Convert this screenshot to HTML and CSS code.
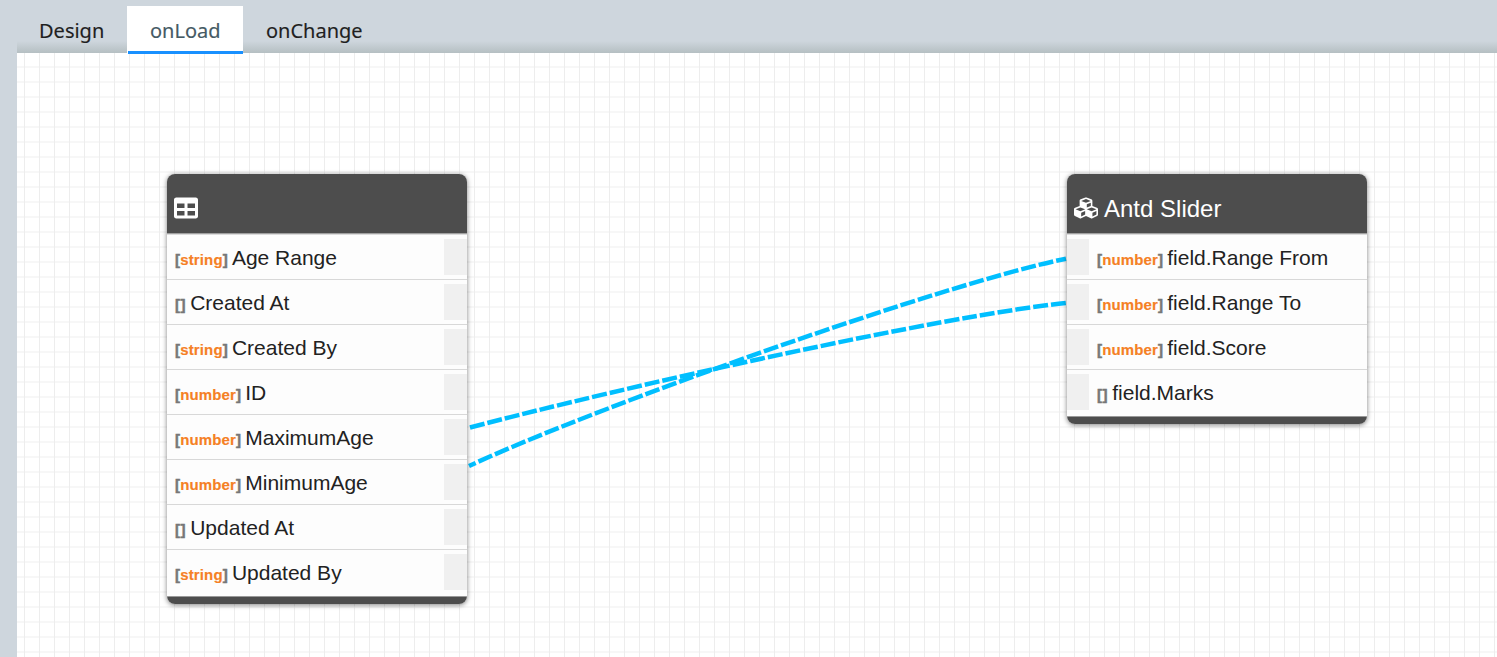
FILE: index.html
```html
<!DOCTYPE html>
<html lang="en">
<head>
<meta charset="utf-8">
<title>onLoad mapping</title>
<link rel="stylesheet" href="styles.css">
</head>
<body>
<main class="panel">
  <nav class="tabs">
    <a class="tab design">Design</a>
    <a class="tab active">onLoad</a>
    <a class="tab change">onChange</a>
  </nav>
  <section class="canvas">
    <svg class="links" viewBox="17 53 1480 604" width="1480" height="604">
      <path d="M470 427.5C620 388 940 316 1066 303"/>
      <path class="shifted" d="M469 466C600 405 950 282 1066 258.7"/>
    </svg>
    <article class="node source">
      <header class="title">
        <svg class="icon" viewBox="0 0 512 512"><path d="M464 32H48C21.49 32 0 53.49 0 80v352c0 26.51 21.49 48 48 48h416c26.51 0 48-21.49 48-48V80c0-26.51-21.49-48-48-48zM224 416H64v-96h160v96zm0-160H64v-96h160v96zm224 160H288v-96h160v96zm0-160H288v-96h160v96z"/></svg>
      </header>
      <div class="row"><b class="type">[<i>string</i>]</b><span class="name">Age Range</span><span class="port"></span></div>
      <div class="row"><b class="type empty">[]</b><span class="name">Created At</span><span class="port"></span></div>
      <div class="row"><b class="type">[<i>string</i>]</b><span class="name">Created By</span><span class="port"></span></div>
      <div class="row"><b class="type">[<i>number</i>]</b><span class="name">ID</span><span class="port"></span></div>
      <div class="row"><b class="type">[<i>number</i>]</b><span class="name">MaximumAge</span><span class="port"></span></div>
      <div class="row"><b class="type">[<i>number</i>]</b><span class="name">MinimumAge</span><span class="port"></span></div>
      <div class="row"><b class="type empty">[]</b><span class="name">Updated At</span><span class="port"></span></div>
      <div class="row last"><b class="type">[<i>string</i>]</b><span class="name">Updated By</span><span class="port"></span></div>
      <footer class="base"></footer>
    </article>
    <article class="node target">
      <header class="title">
        <svg class="icon" viewBox="0 0 512 512"><path d="M488.6 250.2L392 214V105.5c0-15-9.3-28.4-23.4-33.7l-100-37.5c-8.1-3.1-17.1-3.1-25.3 0l-100 37.5c-14.1 5.3-23.4 18.7-23.4 33.7V214l-96.6 36.2C9.3 255.5 0 268.9 0 283.9V394c0 13.6 7.7 26.1 19.9 32.2l100 50c10.1 5.1 22.1 5.1 32.2 0l103.9-52 103.9 52c10.1 5.1 22.1 5.1 32.2 0l100-50c12.2-6.1 19.9-18.6 19.9-32.2V283.9c0-15-9.3-28.4-23.4-33.7zM358 214.8l-85 31.9v-68.2l85-37v73.3zM154 104.1l102-38.2 102 38.2v.6l-102 41.4-102-41.4v-.6zm84 291.1l-85 42.5v-79.1l85-38.8v75.4zm0-112l-102 41.4-102-41.4v-.6l102-38.2 102 38.2v.6zm240 112l-85 42.5v-79.1l85-38.8v75.4zm0-112l-102 41.4-102-41.4v-.6l102-38.2 102 38.2v.6z"/></svg>
        <span class="heading">Antd Slider</span>
      </header>
      <div class="row"><span class="port"></span><b class="type">[<i>number</i>]</b><span class="name">field.Range From</span></div>
      <div class="row"><span class="port"></span><b class="type">[<i>number</i>]</b><span class="name">field.Range To</span></div>
      <div class="row"><span class="port"></span><b class="type">[<i>number</i>]</b><span class="name">field.Score</span></div>
      <div class="row last"><span class="port"></span><b class="type empty">[]</b><span class="name">field.Marks</span></div>
      <footer class="base"></footer>
    </article>
  </section>
</main>
</body>
</html>
```
FILE: styles.css
```css
* { box-sizing: border-box; }
body {
  margin: 0;
  height: 657px;
  overflow: hidden;
  background: #ced6dd;
  font-family: "Liberation Sans", Arial, sans-serif;
}
.panel { margin-left: 17px; height: 657px; display: flex; flex-direction: column; }
.tabs {
  height: 53px;
  flex: none;
  padding: 6px 0 0;
  display: flex;
  background: linear-gradient(#ced6dd 0 41px, #b5bfc2 53px);
  font: 20px/49px "Noto Sans", "Open Sans", sans-serif;
  color: #1f1f1f;
  -webkit-text-stroke: .15px currentColor;
}
.tab { height: 48px; position: relative; z-index: 1; white-space: nowrap; }
.design { width: 110px; padding-left: 22px; }
.active {
  width: 116px;
  padding-left: 23px;
  background: linear-gradient(#1890ff, #1890ff) 1px 45px / 115px 3px no-repeat, #fff;
  color: #455a64;
}
.change { padding-left: 23px; }
.canvas {
  position: relative;
  flex: 1;
  background-color: #fff;
  background-image: linear-gradient(90deg, #ededed 1px, transparent 1px), linear-gradient(#f7f7f7 2px, transparent 2px);
  background-size: 15px 15px;
  background-position: 7px 13px;
}
.links { position: absolute; inset: 0; }
.links path { fill: none; stroke: #00bfff; stroke-width: 4.5; stroke-dasharray: 15 3; }
.links .shifted { stroke-dashoffset: 7.5; }
.node {
  position: absolute;
  top: 121px;
  width: 300px;
  border-radius: 8px;
  background: #fdfdfd;
  box-shadow: 0 1px 5px rgba(0, 0, 0, .5);
}
.source { left: 150px; }
.target { left: 1050px; }
.title {
  height: 61px;
  display: flex;
  align-items: center;
  gap: 6px;
  padding: 10px 7px 0;
  border-radius: 8px 8px 0 0;
  background: linear-gradient(#4d4d4d 59px, #a0a0a0 59px 60px, #dcdcdc 60px);
  color: #fff;
  font-size: 24px;
}
.heading { margin-top: -1px; }
.icon { width: 24px; height: 24px; fill: currentColor; margin-top: -3px; }
.row {
  height: 45px;
  display: flex;
  align-items: center;
  border-bottom: 1px solid #d8d8d8;
  color: #222;
}
.row.last { border-bottom-color: transparent; }
.row + .base { margin-top: 1px; }
.source .row { padding-left: 8px; }
.type {
  color: #777;
  font-size: 15px;
  letter-spacing: .15px;
  -webkit-text-stroke: .5px #777;
  margin: 5px 4px 0 0;
}
.type.empty { letter-spacing: .6px; }
.type i { color: #f58025; font-style: normal; -webkit-text-stroke: .15px #f58025; }
.name { font-size: 21px; margin-top: 2px; white-space: nowrap; }
.port { width: 22px; height: 36px; background: #f0f0f0; }
.source .port { width: 23px; margin-left: auto; }
.target .port { margin-right: 8px; }
.base { height: 8px; border-radius: 0 0 8px 8px; background: #4d4d4d; border-top: 1px solid #999; }
```
